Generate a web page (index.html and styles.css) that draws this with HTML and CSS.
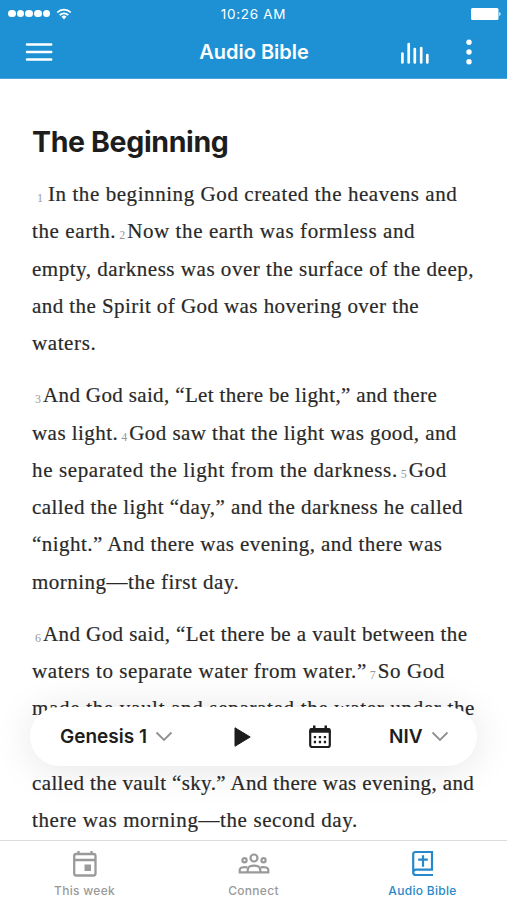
FILE: index.html
```html
<!DOCTYPE html>
<html lang="en">
<head>
  <meta charset="utf-8">
  <title>Audio Bible</title>
  <link rel="stylesheet" href="styles.css">
</head>
<body>
  <div class="screen">
    <header class="header">
      <div class="status">
        <div class="signal">
          <i></i><i></i><i></i><i></i><i></i>
          <svg class="wifi" width="16" height="12" viewBox="0 0 16 12">
            <path d="M1.2 4.5a9.7 9.7 0 0 1 13.6 0M3.7 7.1a6.1 6.1 0 0 1 8.6 0" fill="none" stroke="#fff" stroke-width="1.7"/>
            <path d="M5.5 8.8a3.6 3.6 0 0 1 5 0L8 11.4z" fill="#fff"/>
          </svg>
        </div>
        <span class="time">10:26 AM</span>
        <svg class="battery" width="30" height="12" viewBox="0 0 30 12">
          <rect width="27.5" height="12" rx="1.5" fill="#fff"/>
          <path d="M28.3 4c1.7.6 1.7 3.4 0 4z" fill="#fff"/>
        </svg>
      </div>
      <div class="nav_bar">
        <svg class="menu" width="28" height="20" viewBox="0 0 28 20">
          <path d="M2 2.5h24.2M2 10h24.2M2 17.5h24.2" stroke="#fff" stroke-width="2.5" stroke-linecap="round"/>
        </svg>
        <h1 class="title">Audio Bible</h1>
        <div class="actions">
          <svg width="30" height="24" viewBox="0 0 30 24">
            <path d="M2.4 13.5v9M8.7 4v18.500M14.8 9v13.5M21.2 8v14.500M27.3 15v7.500" stroke="#fff" stroke-width="2.7" stroke-linecap="round"/>
          </svg>
          <svg width="6" height="26" viewBox="0 0 6 26" fill="#fff">
            <circle cx="3" cy="3.2" r="2.7"/><circle cx="3" cy="13" r="2.7"/><circle cx="3" cy="22.8" r="2.7"/>
          </svg>
        </div>
      </div>
    </header>

    <main class="reader">
      <h2>The Beginning</h2>
      <p>
        <span class="line l1"><sub class="first">1</sub>In the beginning God created the heavens and</span>
        <span class="line l2">the earth.<sub>2</sub>Now the earth was formless and</span>
        <span class="line l3">empty, darkness was over the surface of the deep,</span>
        <span class="line l4">and the Spirit of God was hovering over the</span>
        <span class="line l5">waters.</span>
      </p>
      <p>
        <span class="line l6"><sub>3</sub>And God said, “Let there be light,” and there</span>
        <span class="line l7">was light.<sub>4</sub>God saw that the light was good, and</span>
        <span class="line l8">he separated the light from the darkness.<sub>5</sub>God</span>
        <span class="line l9">called the light “day,” and the darkness he called</span>
        <span class="line l10">“night.” And there was evening, and there was</span>
        <span class="line l11">morning—the first day.</span>
      </p>
      <p>
        <span class="line l12"><sub>6</sub>And God said, “Let there be a vault between the</span>
        <span class="line l13">waters to separate water from water.”<sub>7</sub>So God</span>
        <span class="line l14">made the vault and separated the water under the</span>
        <span class="line"></span>
        <span class="line l16">called the vault “sky.” And there was evening, and</span>
        <span class="line l17">there was morning—the second day.</span>
      </p>
    </main>

    <div class="player">
      <div class="picker book">
        <span>Genesis 1</span>
        <svg width="18" height="11" viewBox="0 0 18 11"><path d="M1.5 1.5 9 9l7.5-7.5" fill="none" stroke="#909090" stroke-width="1.8"/></svg>
      </div>
      <svg class="play" width="18" height="22" viewBox="0 0 18 22"><path d="M2 1.8v18.4L17.2 11z" fill="#1d1d1d" stroke="#1d1d1d" stroke-linejoin="round"/></svg>
      <svg class="calendar" width="24" height="24" viewBox="0 0 24 24">
        <path d="M2.2 6v14a2 2 0 0 0 2 2h15.6a2 2 0 0 0 2-2V6" fill="none" stroke="#1d1d1d" stroke-width="2.2"/>
        <path d="M1.2 7.8V5a2 2 0 0 1 2-2H5V.5h2.5V3h9V.5H19V3h1.800a2 2 0 0 1 2 2v2.8z" fill="#1d1d1d"/>
        <path d="M5.8 12.2h2.3m2.7 0h2.3m2.7 0h2.3M5.8 17h2.3m2.7 0h2.3m2.7 0h2.3" stroke="#1d1d1d" stroke-width="2.3"/>
      </svg>
      <div class="picker version">
        <span>NIV</span>
        <svg width="18" height="11" viewBox="0 0 18 11"><path d="M1.5 1.5 9 9l7.5-7.5" fill="none" stroke="#909090" stroke-width="1.8"/></svg>
      </div>
    </div>

    <nav class="tabs">
      <a class="tab">
        <svg width="26" height="28" viewBox="0 0 26 28" fill="none" stroke="currentColor" stroke-width="2.3">
          <rect x="2.2" y="4" width="21.3" height="21.5" rx="2"/>
          <path d="M2.2 10h21.3M6.5 1v3M19.5 1v3"/>
          <path d="M12.5 14.5H19V21h-6.500z" fill="currentColor" stroke="none"/>
        </svg>
        <span>This week</span>
      </a>
      <a class="tab">
        <svg width="34" height="28" viewBox="0 0 34 28" fill="none" stroke="currentColor" stroke-width="2.2">
          <circle cx="17" cy="8" r="3.5"/><circle cx="7.5" cy="10.3" r="2.1"/><circle cx="26.5" cy="10.3" r="2.1"/>
          <path d="M10.3 22.3l.8-3.800c.5-2 3-2.800 5.900-2.800s5.400.8 5.900 2.800l.8 3.800zM10.3 22.3H2.700V20c0-2.500 3.500-3.400 7.500-2.700M23.7 22.3h7.600V20c0-2.500-3.500-3.400-7.500-2.700"/>
        </svg>
        <span>Connect</span>
      </a>
      <a class="tab active">
        <svg width="24" height="28" viewBox="0 0 24 28" fill="none" stroke="currentColor" stroke-width="2.2">
          <path d="M22 25H5a2.800 2.800 0 0 1-2.800-2.800V4.200A2.200 2.200 0 0 1 4.400 2H21v17.700H5a2.800 2.800 0 0 0-2.800 2.800M12 5.200v11.500M7.200 9.700h9.600"/>
        </svg>
        <span>Audio Bible</span>
      </a>
    </nav>
  </div>
</body>
</html>
```
FILE: styles.css
```css
*{
    box-sizing: border-box;
}
body{
    margin: 0;
    background: #fff;
    font-family: Inter, "Liberation Sans", sans-serif;
    color: #1d1d1d;
}
svg{
    display: block;
    flex: none;
}
.screen{
    position: relative;
    display: flex;
    flex-direction: column;
    width: 507px;
    height: 900px;
    overflow: hidden;
}
.header{
    flex: none;
    height: 79px;
    background: #1d91d3;
    border-bottom: 1px solid #4ba6dc;
    color: #fff;
}
.status{
    display: grid;
    grid-template-columns: 1fr auto 1fr;
    align-items: center;
    height: 27px;
    padding: 0 6px 0 8px;
}
.signal{
    display: flex;
    align-items: center;
    gap: 1.2px;
}
.signal i{
    width: 7.5px;
    height: 7.5px;
    border-radius: 50%;
    background: #fff;
}
.wifi{
    margin-left: 5px;
}
.time{
    margin-right: 2px;
    font-size: 13.5px;
    letter-spacing: .7px;
}
.battery{
    justify-self: end;
}
.nav_bar{
    display: grid;
    grid-template-columns: 1fr auto 1fr;
    align-items: center;
    height: 50px;
    padding: 0 35px 0 25px;
}
.title{
    margin: 0 0 0 11px;
    font-size: 20px;
    font-weight: 600;
    letter-spacing: 0;
}
.actions{
    display: flex;
    align-items: center;
    justify-content: flex-end;
    gap: 36px;
}
.reader{
    flex: 1;
    min-height: 0;
    padding: 44px 0 0 32px;
    overflow: hidden;
}
.reader h2{
    margin: 0 0 16px;
    font-size: 28.5px;
    line-height: 37px;
    font-weight: 700;
    letter-spacing: -.35px;
}
.reader p{
    margin: 0 0 14.8px;
    font-family: "Liberation Serif", serif;
    font-size: 21px;
    line-height: 37.3px;
    color: #292929;
}
.line{
    display: block;
    height: 37.3px;
    white-space: nowrap;
    -webkit-text-stroke: .2px #292929;
}
.line sub{
    margin: 0 2px 0 3px;
    font-size: 12px;
    line-height: 0;
    letter-spacing: 0;
    vertical-align: -1px;
    color: #999;
    -webkit-text-stroke: 0;
}
.line .first{
    margin: 0 5px;
}
/* tracking of each line of the passage */
.l1{ letter-spacing: .57px; }
.l2{ letter-spacing: .6px; }
.l3{ letter-spacing: .53px; }
.l4{ letter-spacing: .43px; }
.l5{ letter-spacing: .6px; }
.l6{ letter-spacing: .36px; }
.l7{ letter-spacing: .45px; }
.l8{ letter-spacing: .63px; }
.l9{ letter-spacing: .45px; }
.l10{ letter-spacing: .45px; }
.l11{ letter-spacing: .49px; }
.l12{ letter-spacing: .42px; }
.l13{ letter-spacing: .57px; }
.l14{ letter-spacing: .68px; }
.l16{ letter-spacing: .38px; }
.l17{ letter-spacing: .6px; }
.player{
    position: absolute;
    left: 30px;
    top: 707px;
    display: flex;
    align-items: center;
    width: 447px;
    height: 59px;
    padding: 0 0 0 30px;
    border-radius: 30px;
    background: #fff;
    box-shadow: 0 3px 40px rgba(0,0,0,.11);
    font-size: 19px;
    font-weight: 600;
}
.picker{
    display: flex;
    align-items: center;
    gap: 8px;
}
.book{
    width: 173px;
}
.play{
    margin-right: 57px;
}
.version{
    margin-left: 57px;
}
.tabs{
    flex: none;
    display: grid;
    grid-template-columns: repeat(3, 1fr);
    height: 60px;
    border-top: 1px solid #dcdcdc;
    background: #fff;
}
.tab{
    display: flex;
    flex-direction: column;
    align-items: center;
    padding-top: 9px;
    gap: 5px;
    color: #9a9a9a;
    font-size: 12px;
    line-height: 16px;
    font-weight: 500;
    letter-spacing: .3px;
}
.tab.active{
    color: #2789c9;
}
```
